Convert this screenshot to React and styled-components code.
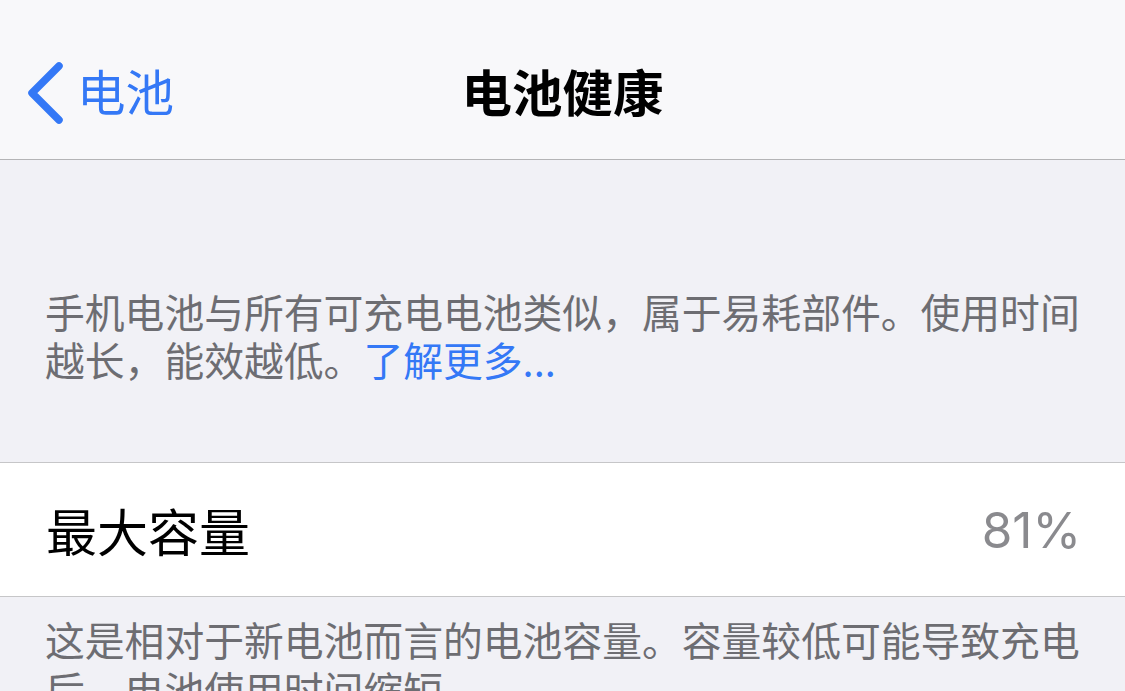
import React from "react";
import styled, { createGlobalStyle } from "styled-components";

const Global = createGlobalStyle`
  html, body { margin: 0; padding: 0; }
  body {
    background: #f1f1f6;
    font-family: "Noto Sans CJK SC", "Noto Sans", sans-serif;
    overflow: hidden;
  }
`;

const Page = styled.div`
  width: 1125px;
  height: 691px;
  overflow: hidden;
  background: #f1f1f6;
`;

const NavBar = styled.header`
  position: relative;
  height: 160px;
  box-sizing: border-box;
  padding-top: 24px;
  background: #f8f8fa;
  border-bottom: 1px solid #b4b4b6;
  display: flex;
  align-items: center;
  justify-content: center;
`;

const BackButton = styled.div`
  position: absolute;
  left: 25px;
  top: 24px;
  bottom: 0;
  display: flex;
  align-items: center;
  gap: 12px;
  color: #3478f6;
  font-size: 48.5px;
  padding-bottom: 4px;
`;

const Chevron = styled.svg`
  margin-top: 8px;
`;

const Title = styled.h1`
  margin: 0;
  font-size: 50.5px;
  font-weight: 700;
  color: #000;
  padding-bottom: 4px;
`;

const HeaderNote = styled.p`
  margin: 0;
  padding: 127px 44px 79px 45px;
  font-size: 39.8px;
  line-height: 48px;
  color: #6d6d72;
`;

const Link = styled.span`
  color: #3478f6;
`;

const Cell = styled.div`
  height: 133px;
  background: #fff;
  border-top: 1px solid #c6c6c8;
  border-bottom: 1px solid #c6c6c8;
  display: flex;
  align-items: center;
  justify-content: space-between;
  padding: 0 44px 0 46px;
  box-sizing: content-box;
`;

const CellLabel = styled.span`
  font-size: 51px;
  color: #000;
`;

const CellValue = styled.span`
  font-family: "Inter", "Noto Sans", sans-serif;
  font-size: 49.5px;
  color: #8a8a8e;
`;

const FooterNote = styled.p`
  margin: 0;
  padding: 17px 44px 0 45px;
  font-size: 39.8px;
  line-height: 50px;
  color: #6d6d72;
`;

export default function App() {
  return (
    <Page>
      <Global />
      <NavBar>
        <BackButton>
          <Chevron width="40" height="64" viewBox="0 0 40 64">
            <path
              d="M34 4 L7 31 L34 58"
              fill="none"
              stroke="#3478f6"
              strokeWidth="7.5"
              strokeLinecap="round"
              strokeLinejoin="round"
            />
          </Chevron>
          <span>电池</span>
        </BackButton>
        <Title>电池健康</Title>
      </NavBar>
      <HeaderNote>
        手机电池与所有可充电电池类似，属于易耗部件。使用时间越长，能效越低。
        <Link>了解更多...</Link>
      </HeaderNote>
      <Cell>
        <CellLabel>最大容量</CellLabel>
        <CellValue>81%</CellValue>
      </Cell>
      <FooterNote>
        这是相对于新电池而言的电池容量。容量较低可能导致充电后，电池使用时间缩短。
      </FooterNote>
    </Page>
  );
}
